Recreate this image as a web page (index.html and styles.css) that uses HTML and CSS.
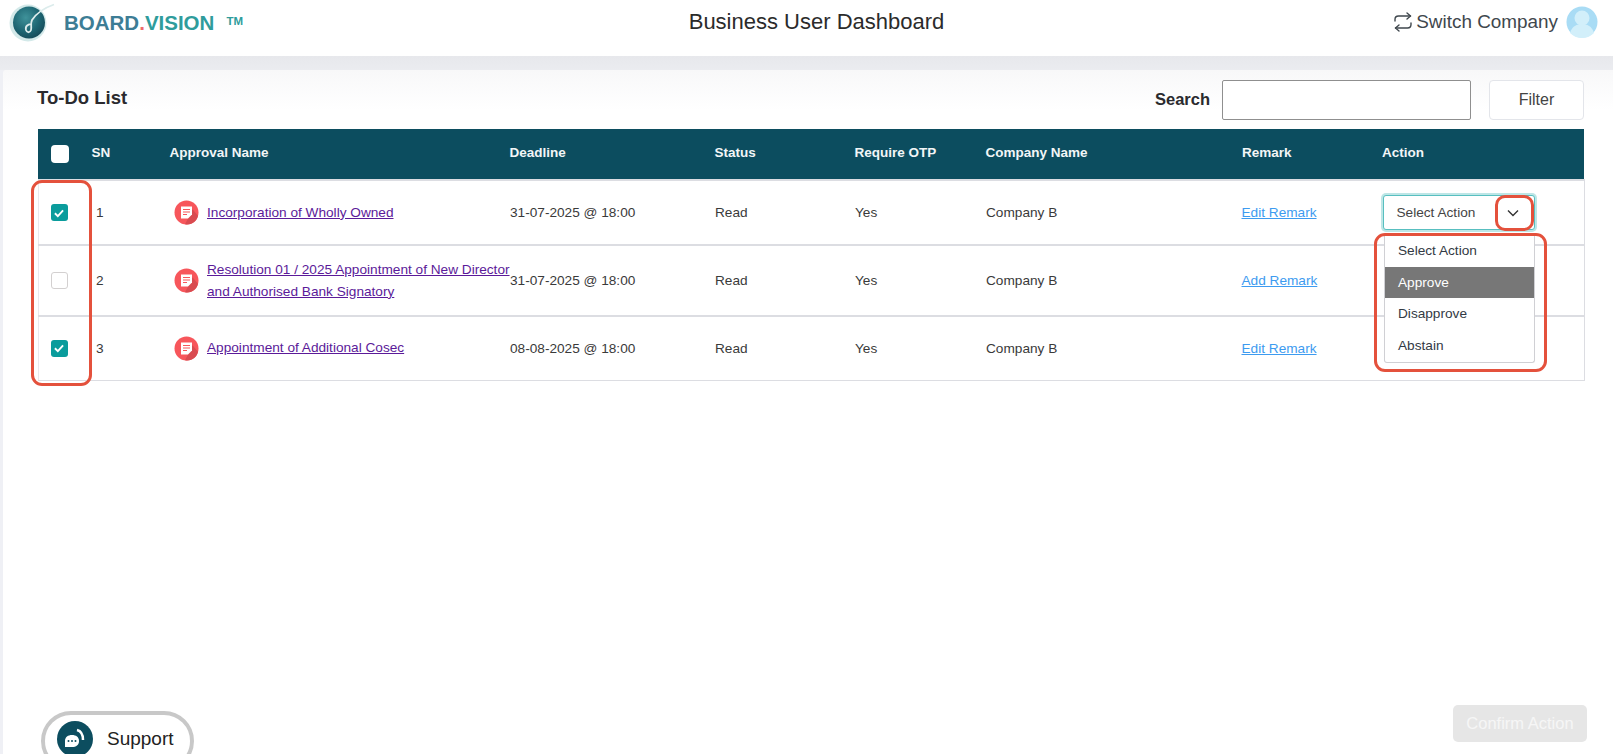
FILE: index.html
```html
<!DOCTYPE html>
<html lang="en">
<head>
<meta charset="utf-8">
<title>Business User Dashboard</title>
<link rel="stylesheet" href="styles.css">
</head>
<body>
<header class="topbar">
  <div class="brand">
    <svg class="logo" width="60" height="44" viewBox="0 0 60 44">
      <defs>
        <radialGradient id="lg" cx="0.4" cy="0.35" r="0.8">
          <stop offset="0" stop-color="#3f929a"/>
          <stop offset="0.55" stop-color="#1d6572"/>
          <stop offset="1" stop-color="#143f4e"/>
        </radialGradient>
      </defs>
      <circle cx="28" cy="23" r="18.500" fill="#d3e9e9"/>
      <circle cx="29" cy="22.500" r="16" fill="url(#lg)"/>
      <path d="M54 4.500C44 8 36 14 32 20c-2 4 0 7-1 10-1 3-4 3-5 0-1-4 2-6 6-6" fill="none" stroke="#dcecec" stroke-width="1.800"/>
    </svg>
    <div class="wordmark"><span class="w1">BOARD</span><span class="w2">.</span><span class="w3">VISION</span><span class="tm">TM</span></div>
  </div>
  <h1 class="page-title">Business User Dashboard</h1>
  <div class="user">
    <svg width="18" height="20" viewBox="0 0 18 20" fill="none" stroke="#3f474d" stroke-width="1.400" stroke-linecap="round" stroke-linejoin="round">
      <path d="M13 1l3.500 3L13 7"/><path d="M16.500 4H4.500C2.500 4 1 5.500 1 7.500V9"/>
      <path d="M5 19l-3.500-3L5 13"/><path d="M1.500 16h12c2 0 3.500-1.500 3.500-3.500V11"/>
    </svg>
    <span class="switch">Switch Company</span>
    <svg class="avatar" width="32" height="32" viewBox="0 0 32 32">
      <circle cx="16" cy="16" r="15.500" fill="#a9dcf5"/>
      <circle cx="16" cy="12" r="7.500" fill="#d2effa"/>
      <path d="M4 27c2-7 7-9 12-9s10 2 12 9c-3 3-7 5-12 5S7 30 4 27z" fill="#d2effa"/>
    </svg>
  </div>
</header>
<div class="band"></div>
<main class="panel">
  <div class="toolbar">
    <h2 class="list-title">To-Do List</h2>
    <div class="tools">
      <label class="search-label" for="q">Search</label>
      <input id="q" class="search" type="text">
      <button class="filter" type="button">Filter</button>
    </div>
  </div>
  <table class="todo">
    <colgroup>
      <col class="c1"><col class="c2"><col class="c3"><col class="c4"><col class="c5"><col class="c6"><col class="c7"><col class="c8"><col class="c9">
    </colgroup>
    <thead>
      <tr>
        <th><span class="box box-head"></span></th>
        <th>SN</th>
        <th>Approval Name</th>
        <th>Deadline</th>
        <th>Status</th>
        <th>Require OTP</th>
        <th>Company Name</th>
        <th>Remark</th>
        <th>Action</th>
      </tr>
    </thead>
    <tbody>
      <tr class="r1">
        <td><span class="box box-on"><svg width="14" height="14" viewBox="0 0 12 12"><path d="M2.500 6.200l2.500 2.500 4.500-5" fill="none" stroke="#fff" stroke-width="1.600"/></svg></span></td>
        <td class="sn">1</td>
        <td><div class="name"><svg class="doc" width="25" height="25" viewBox="0 0 25 25"><use href="#docicon"/></svg><a href="#">Incorporation of Wholly Owned</a></div></td>
        <td class="dl">31-07-2025 @ 18:00</td>
        <td class="st">Read</td>
        <td class="st">Yes</td>
        <td class="st">Company B</td>
        <td class="st"><a class="remark" href="#">Edit Remark</a></td>
        <td class="act">
          <div class="select"><span>Select Action</span><svg width="14" height="8" viewBox="0 0 14 8"><path d="M2 1.500l5 5 5-5" fill="none" stroke="#333" stroke-width="1.400"/></svg></div>
        </td>
      </tr>
      <tr class="r2">
        <td><span class="box box-off"></span></td>
        <td class="sn">2</td>
        <td><div class="name"><svg class="doc" width="25" height="25" viewBox="0 0 25 25"><use href="#docicon"/></svg><a href="#">Resolution 01 / 2025 Appointment of New Director<br>and Authorised Bank Signatory</a></div></td>
        <td class="dl">31-07-2025 @ 18:00</td>
        <td class="st">Read</td>
        <td class="st">Yes</td>
        <td class="st">Company B</td>
        <td class="st"><a class="remark" href="#">Add Remark</a></td>
        <td></td>
      </tr>
      <tr class="r3">
        <td><span class="box box-on"><svg width="14" height="14" viewBox="0 0 12 12"><path d="M2.500 6.200l2.500 2.500 4.500-5" fill="none" stroke="#fff" stroke-width="1.600"/></svg></span></td>
        <td class="sn">3</td>
        <td><div class="name"><svg class="doc" width="25" height="25" viewBox="0 0 25 25"><use href="#docicon"/></svg><a href="#">Appointment of Additional Cosec</a></div></td>
        <td class="dl">08-08-2025 @ 18:00</td>
        <td class="st">Read</td>
        <td class="st">Yes</td>
        <td class="st">Company B</td>
        <td class="st"><a class="remark" href="#">Edit Remark</a></td>
        <td></td>
      </tr>
    </tbody>
  </table>

  <ul class="menu">
    <li>Select Action</li>
    <li class="on">Approve</li>
    <li>Disapprove</li>
    <li>Abstain</li>
  </ul>
  <div class="mark mark-checks"></div>
  <div class="mark mark-arrow"></div>
  <div class="mark mark-menu"></div>

  <div class="foot">
    <div class="support">
      <span class="sup-ic"><svg width="36" height="36" viewBox="0 0 36 36">
        <circle cx="18" cy="18" r="18" fill="#0c4d5f"/>
        <path d="M8 20c0-4 3-6 7-6s7 2 7 6-3 6-7 6H8z" fill="#fff"/>
        <circle cx="11.500" cy="20" r="1" fill="#0c4d5f"/><circle cx="15" cy="20" r="1" fill="#0c4d5f"/><circle cx="18.500" cy="20" r="1" fill="#0c4d5f"/>
        <path d="M20 9c4 1 6 4 6 10" fill="none" stroke="#fff" stroke-width="2.500"/>
      </svg></span>
      <span>Support</span>
    </div>
    <button class="confirm" type="button">Confirm Action</button>
  </div>
</main>
<svg class="defs" width="0" height="0">
  <defs>
    <g id="docicon">
      <circle cx="12.500" cy="12.500" r="12" fill="#f7565b"/>
      <path d="M14 18.500l-3 5.700c6 1.500 12-3 13-8.500l-5.500-6.500z" fill="#d94b50"/>
      <path d="M7 6.500h11v8l-4 4H7z" fill="#fff"/>
      <path d="M9 9.500h7M9 12h7M9 14.500h4" stroke="#f7565b" stroke-width="1.100"/>
    </g>
  </defs>
</svg>
</body>
</html>
```
FILE: styles.css
```css
* { box-sizing: border-box; }
html, body { margin: 0; height: 754px; overflow: hidden; }
body {
  font-family: "Liberation Sans", Arial, sans-serif;
  background: #eff0f5;
  color: #333;
  display: flex;
  flex-direction: column;
}
.topbar {
  height: 56px;
  flex: none;
  background: #fff;
  display: grid;
  grid-template-columns: 1fr auto 1fr;
  align-items: start;
}
.brand { display: flex; align-items: flex-start; }
.logo { flex: none; }
.wordmark {
  margin: 9px 0 0 4px;
  font-size: 20.500px;
  font-weight: 700;
  white-space: nowrap;
  line-height: 24px;
}
.w1 { color: #3d7d95; }
.w2 { color: #ee6a6a; }
.w3 { color: #2f9c9c; }
.tm { font-size: 11.500px; color: #2f9c9c; margin-left: 12px; vertical-align: 5px; }
.page-title {
  margin: 9px 0 0;
  padding-left: 20px;
  font-size: 22px;
  font-weight: 400;
  line-height: 26px;
  color: #2b2b2b;
}
.user {
  display: flex;
  align-items: center;
  justify-content: flex-end;
  padding: 6px 15px 0 0;
  gap: 4px;
}
.switch { font-size: 18.900px; color: #3f474d; margin-right: 4px; }
.band { height: 14px; flex: none; background: linear-gradient(#e7e8ec, #ebecf0); }
.panel {
  flex: 1;
  margin-left: 3px;
  position: relative;
  background: linear-gradient(#f8f8f9, #fff 40px);
  border-top-left-radius: 3px;
  padding: 0 26px 0 34px;
  display: flex;
  flex-direction: column;
}
.toolbar {
  height: 59px;
  flex: none;
  display: flex;
  justify-content: space-between;
  align-items: flex-start;
}
.list-title { margin: 17px 0 0; font-size: 18.500px; font-weight: 700; line-height: 22px; color: #2a2a2e; }
.tools { display: flex; align-items: center; padding-top: 10px; margin-right: 3px; }
.search-label { font-size: 16.500px; font-weight: 700; color: #2a2a2e; margin: 0 12px 2px 0; }
.search {
  width: 249px;
  height: 40px;
  border: 1px solid #8f8f8f;
  border-radius: 2px;
  background: #fff;
  margin-right: 18px;
}
.filter {
  width: 95px;
  height: 40px;
  border: 1px solid #e3e5ea;
  border-radius: 4px;
  background: #fff;
  font: 16px "Liberation Sans", Arial, sans-serif;
  color: #444;
}
.todo {
  width: 1546px;
  margin-left: 0.500px;
  border-collapse: collapse;
  table-layout: fixed;
  font-size: 13.650px;
}
.c1 { width: 45px; } .c2 { width: 78px; } .c3 { width: 340px; } .c4 { width: 205px; }
.c5 { width: 140px; } .c6 { width: 131px; } .c7 { width: 256.500px; } .c8 { width: 140px; } .c9 { width: 210.500px; }
.todo th {
  height: 51px;
  background: #0c4d5f;
  color: #f2f6f7;
  font-size: 13.500px;
  font-weight: 700;
  text-align: left;
  padding: 0 0 4px 8.500px;
}
.todo th:first-child { padding: 0 0 0 13px; }
.todo td:first-child { padding: 0 0 0 12px; }
.todo td {
  border-top: 2px solid #dcdde2;
  border-bottom: 1px solid #dcdde2;
  padding: 0 0 0 8px;
  color: #3a3a3a;
  vertical-align: middle;
}
.todo td:last-child { border-right: 1px solid #dcdde2; }
.todo td:first-child { border-left: 1px solid #e8e9ec; }
.r1 { height: 65px; } .r2 { height: 71px; } .r3 { height: 64px; }
.box { display: flex; align-items: center; justify-content: center; width: 17px; height: 17px; border-radius: 3px; }
.box-head { background: #fff; width: 18px; height: 18px; border-radius: 4px; }
.box-on { background: #0a9c9c; }
.box-off { background: #fff; border: 1px solid #d3d0d0; }
.sn { padding-left: 13px !important; }
.name { display: flex; align-items: center; padding-left: 5px; gap: 8px; line-height: 22px; }
.doc { flex: none; }
.name a { color: #5b1a99; white-space: nowrap; }
.dl { padding-left: 9px !important; }
.st { padding-left: 9px !important; }
.st:nth-child(8) { padding-left: 8px !important; }
.remark { color: #3d9bf0; }
.act { padding-left: 9px !important; }
.select {
  width: 152px;
  height: 35px;
  display: flex;
  align-items: center;
  justify-content: space-between;
  padding: 0 14px 0 13px;
  background: #fff;
  border: 1px solid #58bfc0;
  border-radius: 3px;
  box-shadow: 0 0 0 2px #bde6e6;
  color: #444;
}
.menu {
  position: absolute;
  left: 1381px;
  top: 165px;
  width: 151px;
  margin: 0;
  padding: 0 0 1px;
  list-style: none;
  background: #fff;
  border: 1px solid #d0d0d4;
  border-top: 0;
  border-radius: 0 0 3px 3px;
  font-size: 13.650px;
  color: #333a44;
  z-index: 2;
}
.menu li { height: 31.500px; line-height: 31px; padding-left: 13px; }
.menu .on { background: #777; color: #fff; }
.mark { position: absolute; border: 3.500px solid #e4513c; z-index: 3; }
.mark-checks { left: 28px; top: 110px; width: 61px; height: 206px; border-radius: 11px; }
.mark-arrow { left: 1492px; top: 125px; width: 39px; height: 36px; border-radius: 10px; }
.mark-menu { left: 1371px; top: 163px; width: 173px; height: 139px; border-radius: 11px; }
.foot {
  margin-top: auto;
  height: 43px;
  display: flex;
  justify-content: space-between;
  align-items: flex-start;
}
.support {
  margin-left: 4px;
  width: 153px;
  height: 60px;
  flex: none;
  border: 4.500px solid #c8c8c8;
  border-radius: 30px;
  background: #fff;
  display: flex;
  align-items: flex-start;
  padding: 6px 0 0 12px;
  gap: 14px;
  font-size: 19px;
  color: #222;
  line-height: 36px;
}
.sup-ic { display: block; height: 36px; }
.confirm {
  width: 134px;
  height: 37px;
  margin-top: -6px;
  border: 0;
  border-radius: 5px;
  background: #e6e6e6;
  color: #f6f6f6;
  font: 400 16.500px "Liberation Sans", Arial, sans-serif;
}
.defs { position: absolute; }
```
